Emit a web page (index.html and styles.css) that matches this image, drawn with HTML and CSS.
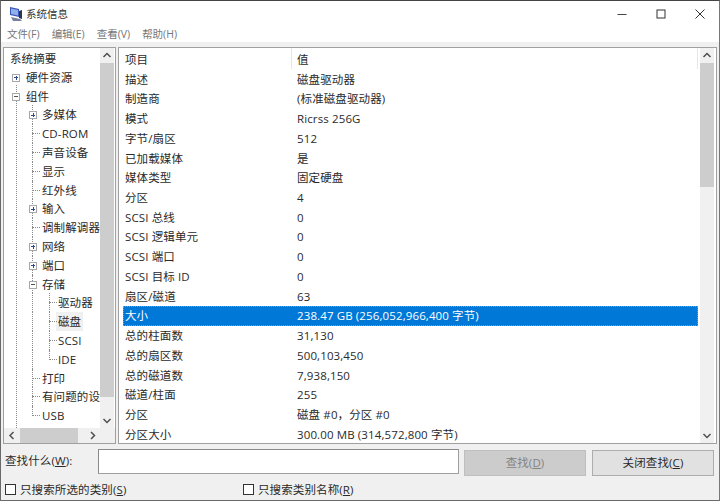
FILE: index.html
```html
<!DOCTYPE html>
<html lang="zh-CN">
<head>
<meta charset="utf-8">
<title>系统信息</title>
<link rel="stylesheet" href="styles.css">
</head>
<body>
<div class="window">
  <header class="titlebar">
    <svg class="app-icon" width="16" height="16" viewBox="0 0 16 16"><path d="M2 1l9 2v8l-9-2z" fill="#3a55b8"/><path d="M3 2.500l7 1.500v5.500l-7-1.500z" fill="#8fb0ea"/><path d="M3 11l9 2 2 2H5z" fill="#77809c"/><path d="M11 5l3-1v9l-3-1z" fill="#2a3550"/></svg>
    <span class="title">系统信息</span>
    <div class="controls">
      <svg width="10" height="10" viewBox="0 0 10 10"><path d="M0.500 5.500h9" stroke="#444" fill="none"/></svg>
      <svg width="10" height="10" viewBox="0 0 10 10"><rect x="1" y="1" width="8" height="8" stroke="#333" fill="none"/></svg>
      <svg width="10" height="10" viewBox="0 0 10 10"><path d="M0.500 0.500l9 9M9.500 0.500l-9 9" stroke="#333" fill="none"/></svg>
    </div>
  </header>
  <nav class="menu"><span>文件(F)</span><span>编辑(E)</span><span>查看(V)</span><span>帮助(H)</span></nav>
  <main class="panes">
    <section class="tree-pane">
      <div class="tree-body">
        <ul class="tree">
          <li class="l0">系统摘要</li>
          <li class="l1 plus"><i></i>硬件资源</li>
          <li class="l1 minus"><i></i>组件</li>
          <li class="l2 plus"><i></i>多媒体</li>
          <li class="l2 leaf"><i></i>CD-ROM</li>
          <li class="l2 leaf"><i></i>声音设备</li>
          <li class="l2 leaf"><i></i>显示</li>
          <li class="l2 leaf"><i></i>红外线</li>
          <li class="l2 plus"><i></i>输入</li>
          <li class="l2 leaf"><i></i>调制解调器</li>
          <li class="l2 plus"><i></i>网络</li>
          <li class="l2 plus"><i></i>端口</li>
          <li class="l2 minus"><i></i>存储</li>
          <li class="l3 leaf"><i></i>驱动器</li>
          <li class="l3 leaf sel"><i></i><b>磁盘</b></li>
          <li class="l3 leaf"><i></i>SCSI</li>
          <li class="l3 leaf end"><i></i>IDE</li>
          <li class="l2 leaf"><i></i>打印</li>
          <li class="l2 leaf"><i></i>有问题的设备</li>
          <li class="l2 leaf end"><i></i>USB</li>
        </ul>
        <div class="vbar tree-vbar">
          <svg class="arrow" width="14" height="15" viewBox="0 0 14 15"><path d="M3.500 9L7 5.500 10.500 9" stroke="#505050" stroke-width="1.500" fill="none"/></svg>
          <div class="thumb"></div>
          <div class="rest"></div>
          <svg class="arrow" width="14" height="15" viewBox="0 0 14 15"><path d="M3.500 6L7 9.500 10.500 6" stroke="#505050" stroke-width="1.500" fill="none"/></svg>
        </div>
      </div>
      <div class="hbar">
        <svg class="arrow" width="15" height="15" viewBox="0 0 15 15"><path d="M9.500 4L6 7.500 9.500 11" stroke="#505050" stroke-width="1.500" fill="none"/></svg>
        <div class="hthumb"></div>
        <div class="hrest"></div>
        <svg class="arrow" width="15" height="15" viewBox="0 0 15 15"><path d="M6 4L9.500 7.500 6 11" stroke="#505050" stroke-width="1.500" fill="none"/></svg>
      </div>
    </section>
    <section class="list-pane">
      <div class="list">
        <div class="row head"><span class="k">项目</span><span class="v">值</span></div>
        <div class="row"><span class="k">描述</span><span class="v">磁盘驱动器</span></div>
        <div class="row"><span class="k">制造商</span><span class="v">(标准磁盘驱动器)</span></div>
        <div class="row"><span class="k">模式</span><span class="v">Ricrss 256G</span></div>
        <div class="row"><span class="k">字节/扇区</span><span class="v">512</span></div>
        <div class="row"><span class="k">已加载媒体</span><span class="v">是</span></div>
        <div class="row"><span class="k">媒体类型</span><span class="v">固定硬盘</span></div>
        <div class="row"><span class="k">分区</span><span class="v">4</span></div>
        <div class="row"><span class="k">SCSI 总线</span><span class="v">0</span></div>
        <div class="row"><span class="k">SCSI 逻辑单元</span><span class="v">0</span></div>
        <div class="row"><span class="k">SCSI 端口</span><span class="v">0</span></div>
        <div class="row"><span class="k">SCSI 目标 ID</span><span class="v">0</span></div>
        <div class="row"><span class="k">扇区/磁道</span><span class="v">63</span></div>
        <div class="row selected"><span class="k">大小</span><span class="v">238.47 GB (256,052,966,400 字节)</span></div>
        <div class="row"><span class="k">总的柱面数</span><span class="v">31,130</span></div>
        <div class="row"><span class="k">总的扇区数</span><span class="v">500,103,450</span></div>
        <div class="row"><span class="k">总的磁道数</span><span class="v">7,938,150</span></div>
        <div class="row"><span class="k">磁道/柱面</span><span class="v">255</span></div>
        <div class="row"><span class="k">分区</span><span class="v">磁盘 #0，分区 #0</span></div>
        <div class="row"><span class="k">分区大小</span><span class="v">300.00 MB (314,572,800 字节)</span></div>
      </div>
      <div class="vbar list-vbar">
        <svg class="arrow" width="14" height="15" viewBox="0 0 14 15"><path d="M3.500 9L7 5.500 10.500 9" stroke="#505050" stroke-width="1.500" fill="none"/></svg>
        <div class="thumb"></div>
        <div class="rest"></div>
        <svg class="arrow" width="14" height="15" viewBox="0 0 14 15"><path d="M3.500 6L7 9.500 10.500 6" stroke="#505050" stroke-width="1.500" fill="none"/></svg>
      </div>
    </section>
  </main>
  <form class="find">
    <label class="find-label">查找什么(<u>W</u>):</label>
    <div class="input"></div>
    <div class="btn disabled"><span>查找(<u>D</u>)</span></div>
    <div class="btn"><span>关闭查找(<u>C</u>)</span></div>
  </form>
  <div class="checks">
    <label class="check first"><span class="box"></span><span>只搜索所选的类别(<u>S</u>)</span></label>
    <label class="check"><span class="box"></span><span>只搜索类别名称(<u>R</u>)</span></label>
  </div>
</div>
</body>
</html>
```
FILE: styles.css
```css
* { box-sizing: border-box; }
html, body { margin: 0; padding: 0; }
body { width: 720px; height: 501px; overflow: hidden; background: #555; }
.window {
  width: 720px; height: 501px; background: #f0f0f0;
  font: 11.5px/1 "Open Sans", "Noto Sans CJK SC", sans-serif;
  letter-spacing: 0.12px;
  color: #2a2a2a; border: 1px solid #6a6a6a; border-top-color: #444; border-right-color: #777;
  display: flex; flex-direction: column; overflow: hidden;
}
.titlebar { height: 26px; background: #fff; display: flex; align-items: center; padding-left: 7px; flex: none; }
.app-icon { margin-right: 2px; }
.title { font-size: 10.500px; letter-spacing: 0; color: #333; }
.controls { margin-left: auto; display: flex; gap: 29px; margin-right: 14px; }
.menu { height: 15px; background: #fff; display: flex; gap: 12px; padding-left: 6px; color: #777; font-size: 10.500px; letter-spacing: 0; align-items: center; flex: none; }
.panes { display: flex; gap: 2px; height: 402px; padding: 5px 2px 0 2px; flex: none; }
.tree-pane { width: 113px; border: 1px solid #a0a0a0; background: #fff; display: flex; flex-direction: column; flex: none; }
.tree-body { flex: 1; display: flex; min-height: 0; }
.tree { position: relative; list-style: none; margin: 0; padding: 1px 0 0; flex: 1; overflow: hidden; white-space: nowrap; }
.tree::before { content: ""; position: absolute; left: 12px; top: 37px; bottom: 0; border-left: 1px dotted #8a8a8a; }
.tree li { position: relative; height: 18.800px; line-height: 19px; }
.tree .l0 { padding-left: 6px; }
.tree .l1 { padding-left: 22px; }
.tree .l2 { padding-left: 38px; }
.tree .l3 { padding-left: 54px; }
.tree i { position: absolute; top: 9px; height: 0; border-top: 1px dotted #8a8a8a; width: 8px; }
.tree .l2 i { left: 28px; }
.tree .l3 i { left: 45px; }
.tree .l2::before { content: ""; position: absolute; top: 0; bottom: 0; left: 28px; border-left: 1px dotted #8a8a8a; }
.tree .l3::before { content: ""; position: absolute; top: 0; bottom: 0; left: 45px; border-left: 1px dotted #8a8a8a; }
.tree .l3::after { content: ""; position: absolute; top: 0; bottom: 0; left: 28px; border-left: 1px dotted #8a8a8a; }
.tree .end::before { bottom: 9px; }
.tree .l1 i { left: 8px; }
.tree .plus i, .tree .minus i { top: 6px; width: 8px; height: 8px; border: 1px solid #a8a8a8; z-index: 1; }
.tree .l2.plus i, .tree .l2.minus i { left: 25px; }
.tree .plus i { background: linear-gradient(#2f4a8a, #2f4a8a) center / 4px 1px no-repeat, linear-gradient(#2f4a8a, #2f4a8a) center / 1px 4px no-repeat, #fff; }
.tree .minus i { background: linear-gradient(#555, #555) center / 4px 1px no-repeat, #fff; }
.tree b { font-weight: normal; display: inline-block; background: #f0f0f0; height: 19px; padding: 0 2px; margin-left: -2px; }
.vbar { width: 14px; background: #f0f0f0; display: flex; flex-direction: column; flex: none; }
.tree-vbar { margin-right: 1px; }
.arrow { flex: none; display: block; }
.thumb { background: #cdcdcd; }
.tree-vbar .thumb { flex: 0 0 334px; }
.list-vbar .thumb { flex: 0 0 124px; }
.rest { flex: 1; }
.hbar { height: 15px; background: #f0f0f0; display: flex; flex: none; }
.hthumb { width: 58px; margin-left: 1px; background: #cdcdcd; }
.hrest { flex: 1; }
.hbar .arrow:last-child { margin-right: 15px; }
.list-pane { flex: 1; border: 1px solid #a0a0a0; background: #fff; display: flex; min-width: 0; padding-right: 2px; }
.list { flex: 1; padding: 2px 2px 0 4px; overflow: hidden; }
.row { display: flex; height: 19.720px; line-height: 20px; white-space: nowrap; }
.row .k { width: 174px; padding-left: 2px; flex: none; }
.row .v { flex: 1; }
.row.head { position: relative; }
.row.head::before, .row.head::after { content: ""; position: absolute; top: -2px; height: 21px; border-left: 1px solid #e6e6e6; }
.row.head::before { left: 168px; }
.row.head::after { right: 0; }
.row.selected { background: #0078d7; color: #fff; outline: 1px dotted #999; outline-offset: -1px; }
.find { display: flex; align-items: flex-start; height: 35px; padding: 5px 3px 0 4px; flex: none; }
.find-label { width: 93px; padding-top: 6px; flex: none; }
.input { width: 361px; height: 25px; background: #fff; border: 1px solid #a0a0a0; border-left-color: #8a8a8a; border-top-color: #8a8a8a; }
.btn { height: 26px; border: 1px solid #adadad; background: #e1e1e1; display: flex; align-items: center; justify-content: center; width: 122px; margin-left: 5px; margin-top: 1px; }
.btn.disabled { background: #ccc; border-color: #bfbfbf; color: #838383; }
.btn + .btn { margin-left: 6px; }
.checks { display: flex; flex: 1; align-items: center; padding-left: 4px; }
.check { display: flex; align-items: center; gap: 4px; }
.check.first { width: 238px; }
.box { width: 11px; height: 11px; border: 1px solid #333; background: #fff; display: block; }
```
